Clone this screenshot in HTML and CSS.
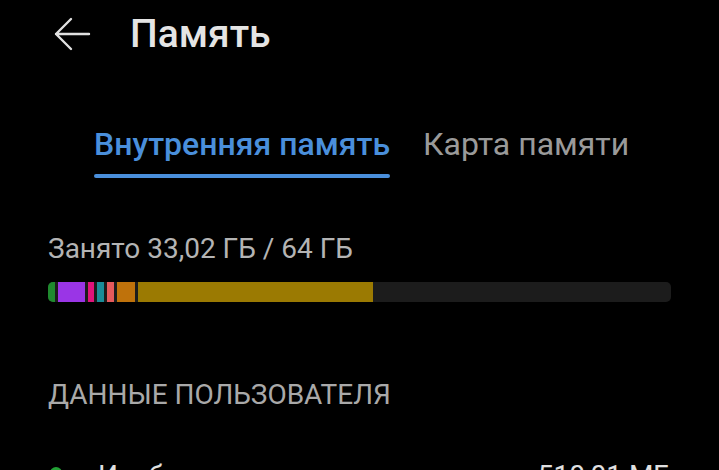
FILE: index.html
```html
<!DOCTYPE html>
<html lang="ru">
<head>
<meta charset="utf-8">
<link rel="stylesheet" href="styles.css">
</head>
<body>
<div class="screen">
  <header class="header">
    <svg class="back" width="38" height="36" viewBox="0 0 38 36"><path d="M36 18H3M18 3L3 18L18 33" fill="none" stroke="#e0e0e0" stroke-width="2.4" stroke-linecap="round" stroke-linejoin="round"/></svg>
    <h1 class="title">Память</h1>
  </header>
  <nav class="tabs">
    <div class="tab active">Внутренняя память<span class="underline"></span></div>
    <div class="tab">Карта памяти</div>
  </nav>
  <div class="usage">Занято 33,02 ГБ / 64 ГБ</div>
  <div class="bar">
    <span class="seg green" style="width:7px"></span>
    <span class="seg purple" style="width:27px"></span>
    <span class="seg pink" style="width:6px"></span>
    <span class="seg teal" style="width:7px"></span>
    <span class="seg salmon" style="width:7px"></span>
    <span class="seg orange" style="width:18px"></span>
    <span class="seg gold" style="width:235px"></span>
  </div>
  <div class="section">ДАННЫЕ ПОЛЬЗОВАТЕЛЯ</div>
  <div class="row">
    <span class="dot"></span>
    <span class="row-name">Изображения</span>
    <span class="row-size">510,01 МБ</span>
  </div>
</div>
</body>
</html>
```
FILE: styles.css
```css
html, body {
  margin: 0;
  padding: 0;
  background: #000;
}
.screen {
  width: 719px;
  height: 470px;
  overflow: hidden;
  font-family: Roboto, "Noto Sans", sans-serif;
}
.header {
  display: flex;
  align-items: center;
  height: 68px;
  padding-left: 53px;
}
.back {
  display: block;
}
.title {
  margin: 0 0 0 39px;
  font-size: 39px;
  font-weight: 500;
  color: #e4e4e4;
  line-height: 1;
}
.tabs {
  display: flex;
  gap: 33px;
  margin-top: 52px;
  padding-left: 94px;
}
.tab {
  position: relative;
  font-size: 32px;
  line-height: 48px;
  color: #9a9a9a;
  padding-bottom: 10px;
}
.tab.active {
  color: #4a8fdb;
  font-weight: 500;
}
.underline {
  position: absolute;
  left: 0;
  right: 0;
  bottom: 0;
  height: 4px;
  border-radius: 2px;
  background: #4a8fdb;
}
.usage {
  margin-top: 56px;
  padding-left: 48px;
  font-size: 28px;
  line-height: 30px;
  color: #b4b4b4;
}
.bar {
  display: flex;
  gap: 3px;
  margin: 18px 0 0 48px;
  width: 623px;
  height: 20px;
  border-radius: 5px;
  overflow: hidden;
  background: #1c1c1c;
}
.seg {
  display: block;
  height: 100%;
}
.green { background: #1f8a2e; }
.purple { background: #9a35e6; }
.pink { background: #e0137a; }
.teal { background: #1a8c98; }
.salmon { background: #e65a5c; }
.orange { background: #bf720b; }
.gold { background: #9b7a02; }
.section {
  margin-top: 77px;
  padding-left: 48px;
  font-size: 28px;
  line-height: 32px;
  color: #a9a9a9;
}
.row {
  display: flex;
  align-items: flex-start;
  margin-top: 49px;
  padding: 0 48px 0 50px;
  font-size: 28px;
  line-height: 32px;
  color: #e0e0e0;
}
.dot {
  flex: none;
  width: 12px;
  height: 12px;
  margin-top: 7px;
  border-radius: 50%;
  background: #22a135;
  margin-right: 36px;
}
.row-name {
  flex: 1;
}
.row-size {
  color: #e0e0e0;
}
```
